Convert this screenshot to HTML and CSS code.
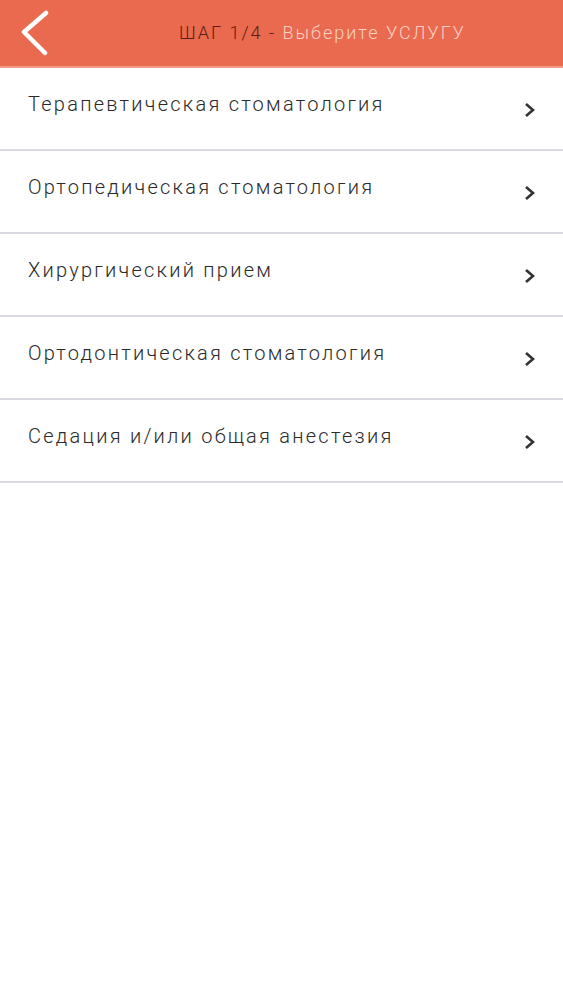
FILE: index.html
```html
<!DOCTYPE html>
<html>
<head>
    <meta charset="utf-8">
    <link rel="stylesheet" href="styles.css">
</head>
<body>
    <div class="header">
        <div class="back">
            <svg width="32" height="46" viewBox="0 0 32 46">
                <polyline points="27,3 5,22 26,43" fill="none" stroke="#fff" stroke-width="4.5" stroke-linecap="round" stroke-linejoin="round" />
            </svg>
        </div>
        <div class="title"><span class="step">ШАГ 1/4 -</span> <span class="choose">Выберите УСЛУГУ</span></div>
    </div>

    <ul class="services">
        <li class="service"><span>Терапевтическая стоматология</span><svg class="chevron" width="12" height="16" viewBox="0 0 12 16"><polyline points="2,2 9,8 2,14" /></svg></li>
        <li class="service"><span>Ортопедическая стоматология</span><svg class="chevron" width="12" height="16" viewBox="0 0 12 16"><polyline points="2,2 9,8 2,14" /></svg></li>
        <li class="service"><span>Хирургический прием</span><svg class="chevron" width="12" height="16" viewBox="0 0 12 16"><polyline points="2,2 9,8 2,14" /></svg></li>
        <li class="service"><span>Ортодонтическая стоматология</span><svg class="chevron" width="12" height="16" viewBox="0 0 12 16"><polyline points="2,2 9,8 2,14" /></svg></li>
        <li class="service"><span>Седация и/или общая анестезия</span><svg class="chevron" width="12" height="16" viewBox="0 0 12 16"><polyline points="2,2 9,8 2,14" /></svg></li>
    </ul>
</body>
</html>
```

FILE: styles.css
```css
* {
    margin: 0;
    padding: 0;
    box-sizing: border-box;
}

body {
    font-family: Roboto, 'Noto Sans', sans-serif;
    background: #fff;
    color: #333;
}

.header {
    height: 68px;
    background-color: #e96a4e;
    border-bottom: 2px solid #f19a86;
    display: flex;
    align-items: center;
}

.back {
    width: 80px;
    padding-left: 19px;
    display: flex;
    align-items: center;
}

.title {
    font-size: 18px;
    font-weight: 300;
    letter-spacing: 2px;
    padding-left: 99px;
    padding-bottom: 2px;
}

.step {
    color: #5a1e12;
}

.choose {
    color: #fbd0c4;
}

.services {
    list-style: none;
}

.service {
    height: 83px;
    border-bottom: 2px solid #d8d8e2;
    display: flex;
    align-items: center;
    justify-content: space-between;
    padding: 0 27px 10px 28px;
    font-size: 20px;
    font-weight: 300;
    letter-spacing: 2.25px;
    color: #2a2a2a;
}

.chevron {
    margin-top: 12px;
}

.chevron polyline {
    fill: none;
    stroke: #333;
    stroke-width: 2.6;
    stroke-linejoin: miter;
}
```
